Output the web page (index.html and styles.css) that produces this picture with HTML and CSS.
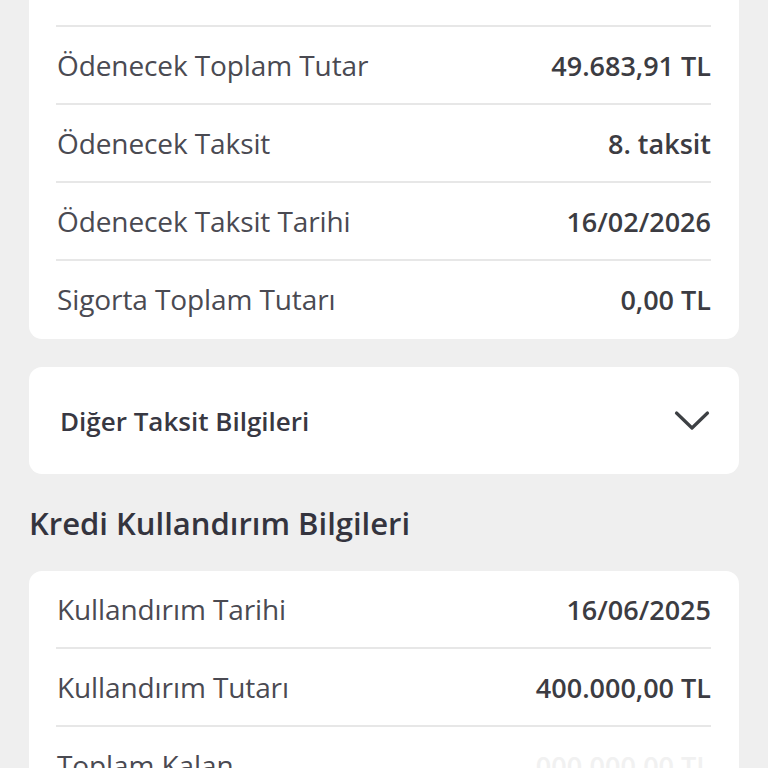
FILE: index.html
```html
<!DOCTYPE html>
<html lang="tr">
<head>
<meta charset="utf-8">
<title>Kredi Detayı</title>
<link rel="stylesheet" href="styles.css">
</head>
<body>
<main class="page">
  <section class="card card-top">
    <div class="row first">
      <span class="label">Kalan Taksit</span>
      <span class="value"></span>
    </div>
    <div class="row">
      <span class="label">Ödenecek Toplam Tutar</span>
      <span class="value">49.683,91 TL</span>
    </div>
    <div class="row">
      <span class="label">Ödenecek Taksit</span>
      <span class="value">8. taksit</span>
    </div>
    <div class="row">
      <span class="label">Ödenecek Taksit Tarihi</span>
      <span class="value">16/02/2026</span>
    </div>
    <div class="row">
      <span class="label">Sigorta Toplam Tutarı</span>
      <span class="value">0,00 TL</span>
    </div>
  </section>

  <section class="card accordion">
    <span class="accordion-title">Diğer Taksit Bilgileri</span>
    <svg class="chevron" width="36" height="22" viewBox="0 0 36 22" aria-hidden="true">
      <path d="M2.5 3 L18 18 L33.5 3" fill="none" stroke="#3d4044" stroke-width="3.2" stroke-linecap="round" stroke-linejoin="round"/>
    </svg>
  </section>

  <h2 class="section-title">Kredi Kullandırım Bilgileri</h2>

  <section class="card">
    <div class="row first">
      <span class="label">Kullandırım Tarihi</span>
      <span class="value">16/06/2025</span>
    </div>
    <div class="row">
      <span class="label">Kullandırım Tutarı</span>
      <span class="value">400.000,00 TL</span>
    </div>
    <div class="row">
      <span class="label">Toplam Kalan</span>
      <span class="value faded">000.000,00 TL</span>
    </div>
  </section>
</main>
</body>
</html>
```

FILE: styles.css
```css
html, body {
  margin: 0;
  padding: 0;
  background: #efefef;
}

body {
  font-family: "Open Sans", "Liberation Sans", sans-serif;
  color: #48484f;
  overflow: hidden;
  height: 768px;
}

.page {
  padding: 0 29px;
}

.card {
  background: #ffffff;
  border-radius: 13px;
}

.card-top {
  margin-top: -51px;
  padding-bottom: 2px;
}

.row {
  display: flex;
  align-items: center;
  justify-content: space-between;
  height: 76px;
  margin: 0 28px 0 27px;
  border-top: 2px solid #e7e7e7;
}

.row.first {
  border-top: none;
}

.label {
  font-size: 28px;
  font-weight: 400;
  color: #4a4a52;
  padding-left: 1px;
  letter-spacing: -0.1px;
}

.value {
  font-size: 27px;
  font-weight: 600;
  color: #3c3c42;
}

.value.faded {
  color: #f1f1f1;
}

.accordion {
  margin-top: 28px;
  height: 107px;
  display: flex;
  align-items: center;
  justify-content: space-between;
  padding: 0 28px 0 31px;
}

.accordion-title {
  font-size: 26px;
  font-weight: 600;
  color: #383842;
}

.chevron {
  display: block;
  margin-right: 1px;
}

.section-title {
  margin: 30px 0 29px 0;
  font-size: 31px;
  line-height: 38px;
  font-weight: 600;
  color: #34343e;
}
```
